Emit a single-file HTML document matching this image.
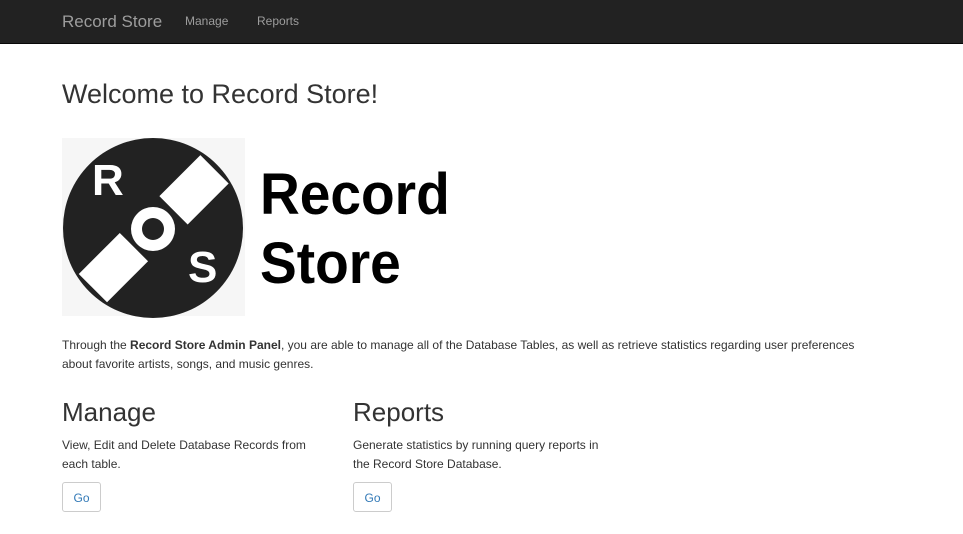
<!DOCTYPE html>
<html><head><style>
body{margin:0;width:963px;height:534px;background:#fff;font-family:"Liberation Sans",sans-serif;color:#333;overflow:hidden;position:relative}
.nav{position:absolute;left:0;top:0;width:963px;height:43px;background:#222;border-bottom:1px solid #080808}
.nav span{position:absolute;color:#9d9d9d}
h1{position:absolute;left:62px;top:79px;margin:0;font-size:27px;font-weight:400;color:#333}
.p{position:absolute;left:62px;top:336px;font-size:12px;line-height:19px;width:815px}
h2{position:absolute;margin:0;font-size:26px;font-weight:400}
.t{position:absolute;font-size:12px;line-height:19px}
.btn{position:absolute;width:39px;height:30px;border:1px solid #ccc;border-radius:3px;color:#337ab7;font-size:12px;text-align:center;line-height:30px;box-sizing:border-box}
</style></head><body>
<div class="nav">
<span style="left:62px;top:12px;font-size:17px">Record Store</span>
<span style="left:185px;top:14px;font-size:12px">Manage</span>
<span style="left:257px;top:14px;font-size:12px">Reports</span>
</div>
<h1>Welcome to Record Store!</h1>
<svg style="position:absolute;left:62px;top:138px" width="400" height="180">
<rect x="0" y="0" width="183" height="178" fill="#f6f6f6"/>
<circle cx="91" cy="90" r="90" fill="#222"/>
<g transform="rotate(-45 91 90)">
<rect x="118" y="72" width="58" height="40" fill="#fff"/>
<rect x="6" y="70" width="58" height="40" fill="#fff"/>
</g>
<circle cx="91" cy="91" r="22" fill="#fff"/>
<circle cx="91" cy="91" r="11" fill="#222"/>
<text x="30" y="57" font-family="Liberation Sans" font-weight="bold" font-size="44" fill="#fff">R</text>
<text x="126" y="144" font-family="Liberation Sans" font-weight="bold" font-size="44" fill="#fff">S</text>
<text transform="translate(198 76) scale(0.95 1)" font-family="Liberation Sans" font-weight="bold" font-size="58" fill="#000">Record</text>
<text transform="translate(198 145) scale(0.95 1)" font-family="Liberation Sans" font-weight="bold" font-size="58" fill="#000">Store</text>
</svg>
<div class="p">Through the <b>Record Store Admin Panel</b>, you are able to manage all of the Database Tables, as well as retrieve statistics regarding user preferences about favorite artists, songs, and music genres.</div>
<h2 style="left:62px;top:397px">Manage</h2>
<div class="t" style="left:62px;top:436px;width:265px">View, Edit and Delete Database Records from each table.</div>
<div class="btn" style="left:62px;top:482px">Go</div>
<h2 style="left:353px;top:397px">Reports</h2>
<div class="t" style="left:353px;top:436px;width:262px">Generate statistics by running query reports in the Record Store Database.</div>
<div class="btn" style="left:353px;top:482px">Go</div>
</body></html>
